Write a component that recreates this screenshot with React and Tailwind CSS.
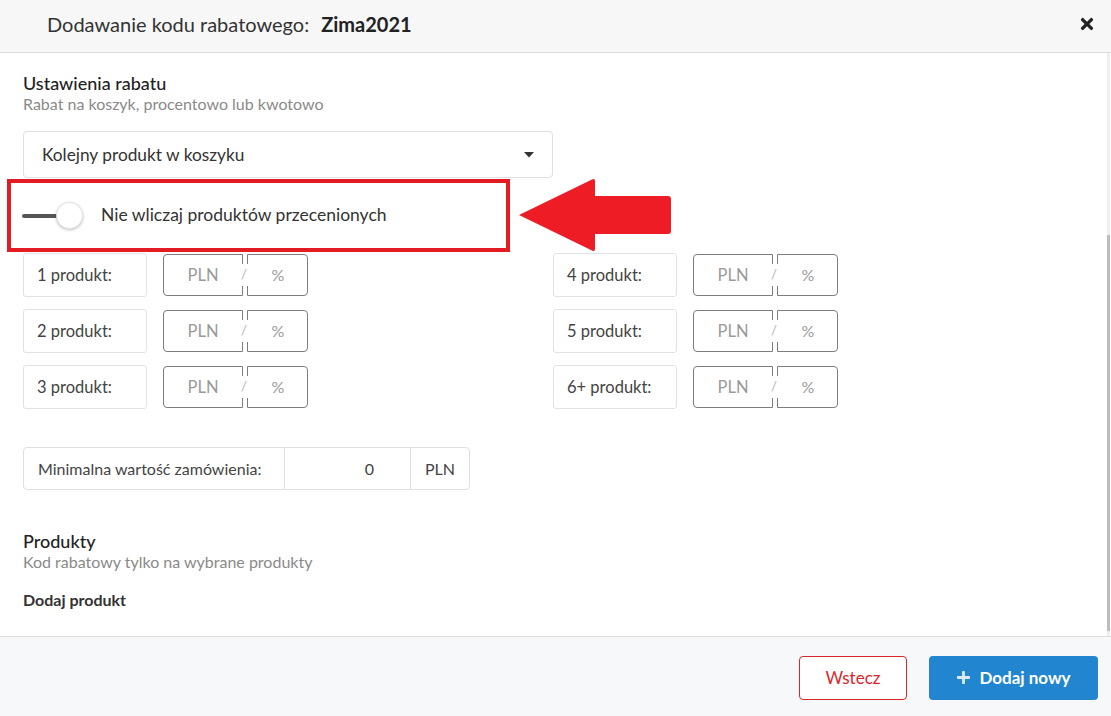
import React from "react";
import { FaTimes, FaPlus } from "react-icons/fa";

function PriceInput() {
  return (
    <div className="relative flex h-[42px] gap-[4px]">
      <div className="w-[80px] h-full border border-[#7d7d7d] rounded-l-[4px] flex items-center justify-center text-[16.5px] text-[#9a9a9a]">
        PLN
      </div>
      <div className="w-[61px] h-full border border-[#7d7d7d] rounded-r-[4px] flex items-center justify-center text-[16px] text-[#9a9a9a] pl-[1px]">
        %
      </div>
      <span className="absolute left-[76px] top-[10px] h-[22px] w-[10px] bg-white flex items-center justify-center text-[13px] text-[#b0b0b0]">
        /
      </span>
    </div>
  );
}

function ProductRow({ label }) {
  return (
    <div className="flex items-center h-[44px]">
      <div className="w-[124px] h-[44px] border border-[#e2e2e2] rounded-[3px] flex items-center pl-[13px] text-[16.5px] text-[#444]">
        {label}
      </div>
      <div className="ml-[16px]">
        <PriceInput />
      </div>
    </div>
  );
}

export default function App() {
  return (
    <div
      className="w-[1111px] h-[716px] bg-white flex flex-col overflow-hidden relative"
      style={{ fontFamily: "Lato, 'Open Sans', sans-serif" }}
    >
      {/* Header */}
      <div className="h-[53px] shrink-0 bg-[#f7f7f7] border-b border-[#dcdcdc] flex items-center pl-[47px] pr-[15px] pb-[4px]">
        <div className="text-[20px] text-[#333] flex-1">
          Dodawanie kodu rabatowego:
          <span className="font-bold ml-[12px] text-[#222]">Zima2021</span>
        </div>
        <FaTimes className="text-[#222] w-[18px] h-[18px]" />
      </div>

      {/* Body */}
      <div className="flex-1 flex min-h-0">
        <div className="flex-1 pl-[23px] pt-[19px] relative">
          <div className="text-[18px] font-medium text-[#222] leading-[22px]">Ustawienia rabatu</div>
          <div className="text-[16px] text-[#8a8a8a] leading-[20px] mt-[0px]">
            Rabat na koszyk, procentowo lub kwotowo
          </div>

          {/* Select */}
          <div className="mt-[17px] w-[530px] h-[47px] border border-[#e0e0e0] rounded-[4px] flex items-center pl-[18px] pr-[18px] text-[17.3px] text-[#333]">
            <span className="flex-1">Kolejny produkt w koszyku</span>
            <svg width="10" height="6" viewBox="0 0 10 6">
              <polygon points="0,0 10,0 5,5.5" fill="#333" />
            </svg>
          </div>

          {/* Toggle row */}
          <div className="relative h-[75px] flex items-center -ml-[1px]">
            <div className="relative w-[62px] h-[27px] flex items-center">
              <div className="w-[40px] h-[4px] bg-[#555] rounded-full" />
              <div className="absolute left-[34px] top-0 w-[27px] h-[27px] rounded-full bg-white border border-[#e4e4e4] shadow-[0_1px_3px_rgba(0,0,0,0.25)]" />
            </div>
            <span className="ml-[17px] text-[17.5px] text-[#333]">Nie wliczaj produktów przecenionych</span>

            {/* annotation box */}
            <div className="absolute left-[-15px] top-[1px] w-[503px] h-[73px] border-[4px] border-[#e31b23] pointer-events-none" />
            {/* annotation arrow */}
            <svg
              className="absolute left-[494px] top-[-1px]"
              width="158"
              height="76"
              viewBox="0 0 158 76"
            >
              <path
                d="M3 38 L76 2.5 Q79 1 79 4 L79 19 L152 19 Q155 19 155 22 L155 54 Q155 57 152 57 L79 57 L79 72 Q79 75 76 73.5 Z"
                fill="#ee1c25"
              />
            </svg>
          </div>

          {/* Product rows */}
          <div className="grid grid-cols-[530px_530px] gap-y-[12px]">
            <ProductRow label="1 produkt:" />
            <ProductRow label="4 produkt:" />
            <ProductRow label="2 produkt:" />
            <ProductRow label="5 produkt:" />
            <ProductRow label="3 produkt:" />
            <ProductRow label="6+ produkt:" />
          </div>

          {/* Min order */}
          <div className="mt-[38px] w-[447px] h-[43px] border border-[#e0e0e0] rounded-[4px] flex text-[16px] text-[#444]">
            <div className="w-[261px] flex items-center pl-[14px] border-r border-[#e0e0e0]">
              Minimalna wartość zamówienia:
            </div>
            <div className="w-[126px] flex items-center justify-end pr-[36px] border-r border-[#e0e0e0]">
              0
            </div>
            <div className="flex-1 flex items-center justify-center">PLN</div>
          </div>

          <div className="mt-[40px] text-[18px] font-medium text-[#222] leading-[22px]">Produkty</div>
          <div className="text-[16px] text-[#8a8a8a] leading-[20px]">Kod rabatowy tylko na wybrane produkty</div>
          <div className="mt-[18px] text-[16px] font-bold text-[#333] leading-[20px]">Dodaj produkt</div>
        </div>

        {/* scrollbar */}
        <div className="w-[3px] mr-[1px] bg-[#eeeeee] flex flex-col pt-[182px] pb-[5px]">
          <div className="flex-1 bg-[#bdbdbd]" />
        </div>
      </div>

      {/* Footer */}
      <div className="h-[80px] shrink-0 bg-[#f7f8fa] border-t border-[#dcdcdc] flex items-center justify-end pr-[13px] gap-[22px] pt-[2px]">
        <button className="w-[108px] h-[44px] border border-[#d9262b] rounded-[4px] bg-white text-[#d9262b] text-[17px]">
          Wstecz
        </button>
        <button className="w-[169px] h-[44px] rounded-[4px] bg-[#2185d0] text-white text-[17px] font-bold flex items-center justify-center gap-[8px]">
          <FaPlus className="w-[15px] h-[15px] text-[#dde9f4]" />
          Dodaj nowy
        </button>
      </div>
    </div>
  );
}
